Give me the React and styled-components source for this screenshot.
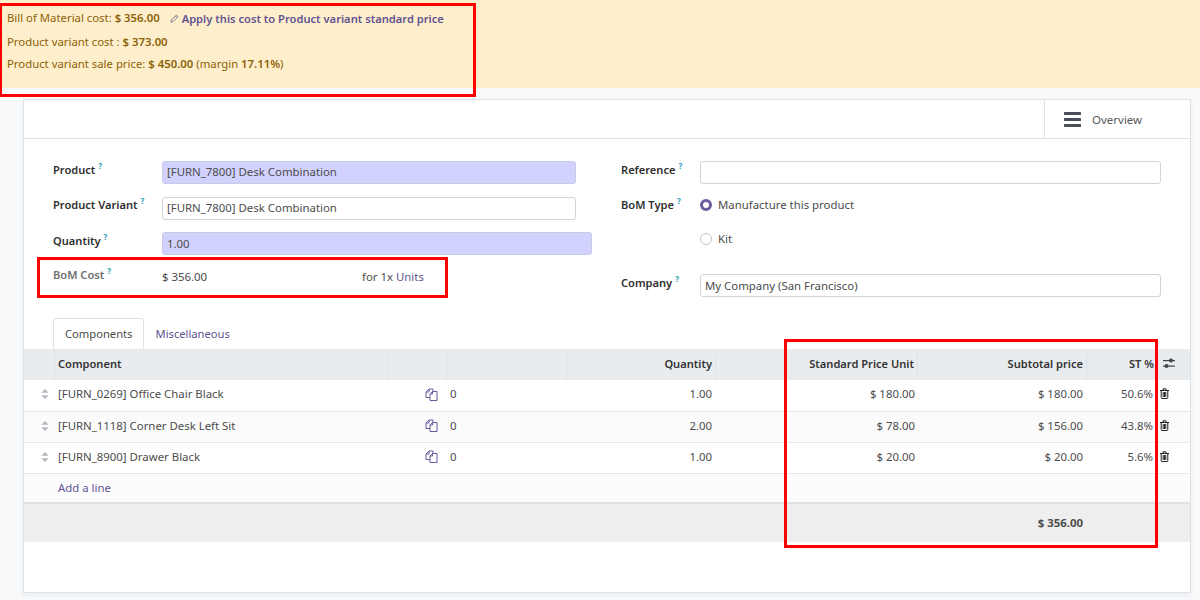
import React from "react";
import styled, { createGlobalStyle } from "styled-components";

const Global = createGlobalStyle`
  html, body { margin: 0; padding: 0; background: #f8f9fa; }
  body { font-family: "Noto Sans", "Open Sans", sans-serif; font-size: 11.4px; color: #4c4c4c; height: 600px; overflow: hidden; }
  * { box-sizing: border-box; }
`;
const Page = styled.div`position: relative; width: 1200px; height: 600px; overflow: hidden;`;
const Banner = styled.div`
  height: 88px; background: #ffeecc; color: #8a6207; padding: 9px 7px 0;
  display: flex; flex-direction: column; gap: 5px;
`;
const BannerLine = styled.div`height: ${p => p.$h || 17}px; line-height: 17px; white-space: nowrap; font-size: 11.35px;`;
const Strong = styled.b`font-weight: 600;`;
const ApplyLink = styled.a`color: #5f5390; font-weight: 600; margin-left: 10px; display: inline-flex; align-items: center; gap: 3px; font-size: 11.15px; position: relative; top: 1px;`;
const Sheet = styled.div`
  margin: 11px 9px 0 23px; height: 494px; background: #fff; border: 1px solid #dee2e6;
  box-shadow: 0 2px 6px rgba(0,0,0,.05);
`;
const ButtonBox = styled.div`height: 39px; border-bottom: 1px solid #dee2e6; display: flex; justify-content: flex-end;`;
const StatButton = styled.div`
  width: 146px; border-left: 1px solid #dee2e6; display: flex; align-items: center; padding-left: 19px; gap: 11px; color: #5a5a5a; font-size: 11.5px;
`;
const FormGrid = styled.div`display: flex; padding: 21px 29px 0 29px; height: 179px;`;
const LeftCol = styled.div`width: 568px; display: flex; flex-direction: column;`;
const RightCol = styled.div`flex: 1; display: flex; flex-direction: column;`;
const Row = styled.div`display: flex; align-items: flex-start; height: ${p => p.$h}px;`;
const Label = styled.div`
  width: ${p => p.$w}px; flex: none; margin-top: ${p => p.$mt ?? 1}px; line-height: 17px; font-weight: 600; font-size: 11.1px;
  color: ${p => p.$muted ? "#6f6f6f" : "#2f2f2f"}; white-space: nowrap;
`;
const Help = styled.sup`color: #2a9db5; font-size: 8px; font-weight: 700; margin-left: 3px; line-height: 0; vertical-align: 5px;`;
const Input = styled.div`
  width: ${p => p.$w}px; height: 23px; line-height: ${p => p.$lh || 20}px; padding: 0 4px; margin-top: 1px; border: 1px solid ${p => p.$req ? "#c9c9e8" : "#d4d4d4"}; border-radius: 3px;
  background: ${p => p.$req ? "#d2d2ff" : "#fff"}; color: #4c4c4c; white-space: nowrap;
`;
const CostValue = styled.div`width: 200px; line-height: 17px; padding-top: 1px;`;
const ForUnits = styled.div`line-height: 17px; padding-top: 1px; a { color: #5f5390; }`;
const Radio = styled.div`display: flex; align-items: center; gap: 6px; height: 17px; margin-top: 1px;`;
const RadioDot = styled.span`
  width: 12px; height: 12px; border-radius: 50%; flex: none;
  ${p => p.$on ? "border: 3.5px solid #6b5b9e; background: #fff;" : "border: 1px solid #c8c8c8; background: #fff;"}
`;
const Tabs = styled.div`display: flex; height: 31px; padding-left: 29px;`;
const Tab = styled.div`
  padding: 0 11px; line-height: ${p => p.$active ? 29 : 31}px; color: ${p => p.$active ? "#4c4c4c" : "#5f5390"}; white-space: nowrap; font-size: 11.2px;
  ${p => p.$active ? "background:#fff;border:1px solid #dee2e6;border-bottom:none;border-radius:3px 3px 0 0;" : ""}
`;
const columns = "30px 334px 58px 120px 149px 70px 132px 169px 71px 33px";
const TRow = styled.div`
  display: grid; grid-template-columns: ${columns}; height: ${p => p.$h}px; background: ${p => p.$bg || "#fff"};
  border-bottom: ${p => p.$line ? `${p.$lw || 1}px solid ${p.$line}` : "none"}; align-items: center;
`;
const Head = styled.div`
  height: 100%; display: flex; align-items: center; justify-content: ${p => p.$right ? "flex-end" : "flex-start"};
  padding: 0 3px 3px 3px; font-weight: 600; font-size: 11.1px; color: #333; border-left: ${p => p.$sep ? "1px solid #dee2e6" : "none"}; white-space: nowrap;
`;
const OptionsHead = styled(Head)`padding-left: 6px;`;
const Cell = styled.div`
  display: flex; align-items: center; justify-content: ${p => p.$right ? "flex-end" : p.$center ? "center" : "flex-start"};
  padding: ${p => p.$pad || "0 3px 4px 4px"}; white-space: nowrap; font-weight: ${p => p.$bold ? 700 : 400}; height: 100%;
`;
const HandleCell = styled(Cell)`justify-content: flex-end; padding: 0 5px 3px 0;`;
const AddCell = styled(Cell)`padding: 0 3px 2px 4px;`;
const TotalCell = styled(Cell)`padding: 0 3px 2px 4px;`;
const AddLink = styled.a`color: #5f5390;`;
const Annotation = styled.div`position: absolute; border: 3px solid #ff0000; pointer-events: none;`;

const Bars = () => (
  <svg width="17" height="15" viewBox="0 0 17 15"><g fill="#4a4f59"><rect y="0" width="17" height="3" rx=".6"/><rect y="6" width="17" height="3" rx=".6"/><rect y="12" width="17" height="3" rx=".6"/></g></svg>
);
const Pencil = () => (
  <svg width="9" height="9" viewBox="0 0 10 10" fill="none" stroke="#7a7090" strokeWidth="1"><path d="M1 9l.6-2.4L7 1.2l1.8 1.8L3.4 8.4z"/><path d="M6 2.2l1.8 1.8"/></svg>
);
const Handle = () => (
  <svg width="8" height="10" viewBox="0 0 8 10" fill="#b4b9bf"><path d="M4 0l3.6 3.8H.4z"/><path d="M4 10L.4 6.2h7.2z"/></svg>
);
const Copy = () => (
  <svg width="13" height="13" viewBox="0 0 13 13" fill="none" stroke="#6b5b9e" strokeWidth="1"><path d="M5 9.5H1V4l3-3h4v2.5"/><path d="M1 4h3V1"/><path d="M5 9.5V6l2.5-2.5H12v9H5z"/><path d="M5 6h2.5V3.5"/></svg>
);
const Trash = () => (
  <svg width="9" height="11" viewBox="0 0 9 11" fill="none" stroke="#222" strokeWidth="1"><path d="M0 2.5h9M3 2.5V.8h3v1.7M1.2 2.5v7.2c0 .5.3.8.8.8h5c.5 0 .8-.3.8-.8V2.5M3.2 4v5M4.5 4v5M5.8 4v5"/></svg>
);
const Sliders = () => (
  <svg width="12" height="11" viewBox="0 0 12 11" fill="#444"><rect y="2" width="12" height="1.2"/><rect y="7.5" width="12" height="1.2"/><circle cx="8" cy="2.6" r="2"/><circle cx="3.5" cy="8.1" r="2"/></svg>
);

const lines = [
  ["[FURN_0269] Office Chair Black", "1.00", "$ 180.00", "$ 180.00", "50.6%"],
  ["[FURN_1118] Corner Desk Left Sit", "2.00", "$ 78.00", "$ 156.00", "43.8%"],
  ["[FURN_8900] Drawer Black", "1.00", "$ 20.00", "$ 20.00", "5.6%"],
];

export default function App() {
  return (
    <Page>
      <Global />
      <Banner>
        <BannerLine $h={19}>Bill of Material cost: <Strong>$ 356.00</Strong><ApplyLink><Pencil />Apply this cost to Product variant standard price</ApplyLink></BannerLine>
        <BannerLine>Product variant cost : <Strong>$ 373.00</Strong></BannerLine>
        <BannerLine>Product variant sale price: <Strong>$ 450.00</Strong> (margin <Strong>17.11%</Strong>)</BannerLine>
      </Banner>
      <Sheet>
        <ButtonBox><StatButton><Bars />Overview</StatButton></ButtonBox>
        <FormGrid>
          <LeftCol>
            <Row $h={36}><Label $w={109}>Product<Help>?</Help></Label><Input $w={414} $req>[FURN_7800] Desk Combination</Input></Row>
            <Row $h={35}><Label $w={109} $mt={0}>Product Variant<Help>?</Help></Label><Input $w={414}>[FURN_7800] Desk Combination</Input></Row>
            <Row $h={36}><Label $w={109}>Quantity<Help>?</Help></Label><Input $w={430} $req $lh={22}>1.00</Input></Row>
            <Row $h={30}><Label $w={109} $muted $mt={-1}>BoM Cost<Help>?</Help></Label><CostValue>$ 356.00</CostValue><ForUnits>for 1x <a>Units</a></ForUnits></Row>
          </LeftCol>
          <RightCol>
            <Row $h={35}><Label $w={79}>Reference<Help>?</Help></Label><Input $w={461} /></Row>
            <Row $h={34}><Label $w={79}>BoM Type<Help>?</Help></Label><Radio><RadioDot $on />Manufacture this product</Radio></Row>
            <Row $h={44}><Label $w={79} /><Radio><RadioDot />Kit</Radio></Row>
            <Row $h={30}><Label $w={79}>Company<Help>?</Help></Label><Input $w={461} $lh={22}>My Company (San Francisco)</Input></Row>
          </RightCol>
        </FormGrid>
        <Tabs><Tab $active>Components</Tab><Tab>Miscellaneous</Tab></Tabs>
        <TRow $h={31} $bg="#e9ecef">
          <Head /><Head $sep>Component</Head><Head $sep /><Head $sep /><Head $sep $right>Quantity</Head><Head $sep /><Head $sep $right>Standard Price Unit</Head><Head $sep $right>Subtotal price</Head><Head $sep $right>ST %</Head><OptionsHead><Sliders /></OptionsHead>
        </TRow>
        {lines.map((l, i) => (
          <TRow key={l[0]} $h={i === 0 ? 32 : 31} $bg={i === 1 ? "#fbfbfb" : "#fff"} $line="#e6e8ea">
            <HandleCell><Handle /></HandleCell>
            <Cell>{l[0]}</Cell>
            <Cell $right $pad="0 8px 3px 0"><Copy /></Cell>
            <Cell>0</Cell>
            <Cell $right>{l[1]}</Cell>
            <Cell />
            <Cell $right $pad="0 2px 4px 0">{l[2]}</Cell>
            <Cell $right>{l[3]}</Cell>
            <Cell $right $pad="0 4px 4px 0">{l[4]}</Cell>
            <Cell $pad="0 0 4px 3px"><Trash /></Cell>
          </TRow>
        ))}
        <TRow $h={30} $bg="#fcfcfc" $line="#dde2e7" $lw={2}>
          <Cell /><AddCell><AddLink>Add a line</AddLink></AddCell>
        </TRow>
        <TRow $h={38} $bg="#eeeeee">
          <Cell /><Cell /><Cell /><Cell /><Cell /><Cell /><Cell /><TotalCell $right $bold>$ 356.00</TotalCell>
        </TRow>
      </Sheet>
      <Annotation style={{ left: -1, top: 3, width: 477, height: 94 }} />
      <Annotation style={{ left: 37, top: 257, width: 411, height: 41 }} />
      <Annotation style={{ left: 784, top: 339, width: 374, height: 209 }} />
    </Page>
  );
}
